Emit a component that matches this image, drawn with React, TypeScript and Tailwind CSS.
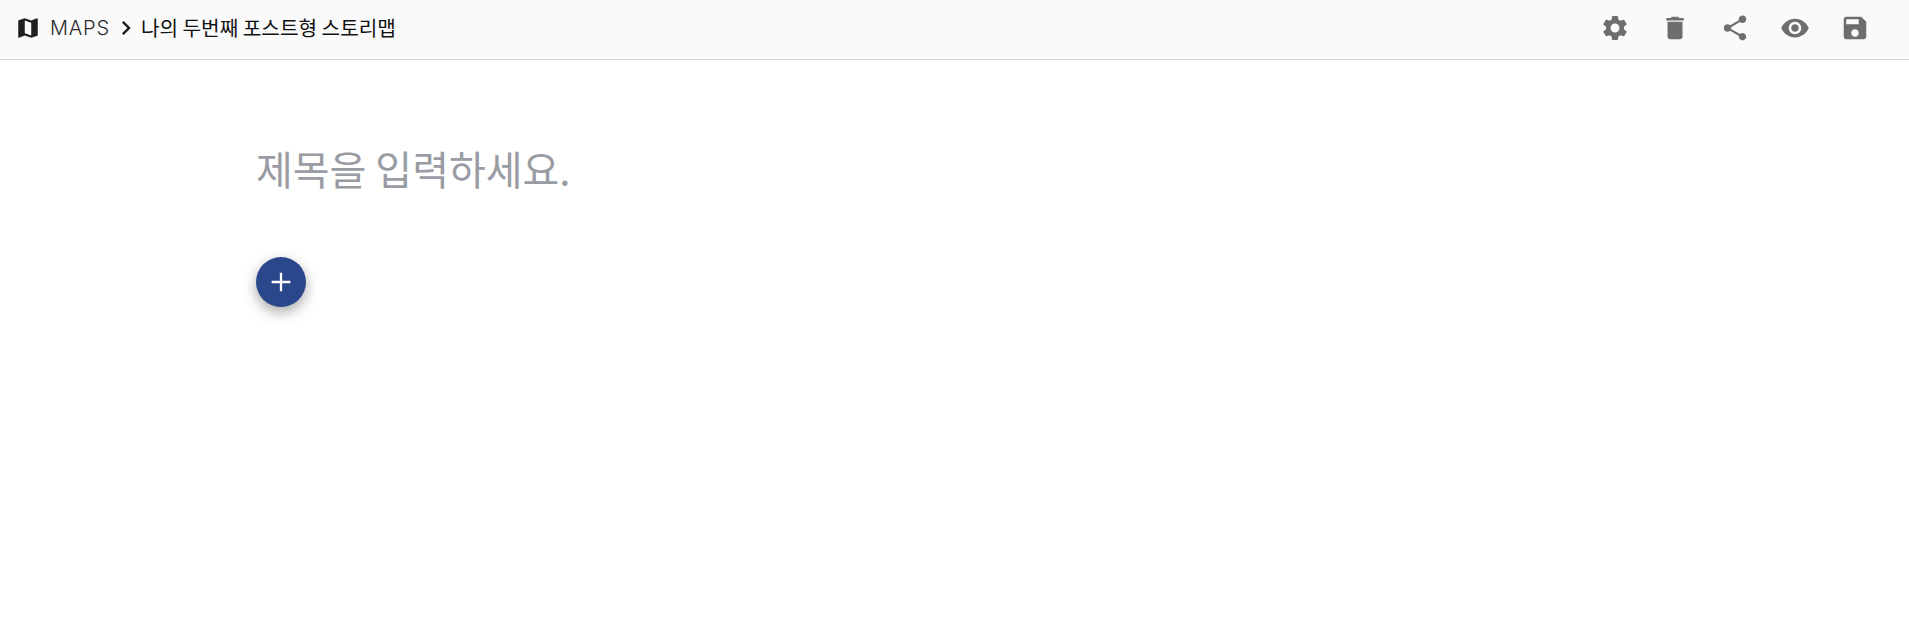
const icons = [
  'M19.14 12.94c.04-.3.06-.61.06-.94 0-.32-.02-.64-.07-.94l2.03-1.58c.18-.14.23-.41.12-.61l-1.92-3.32c-.12-.22-.37-.29-.59-.22l-2.39.96c-.5-.38-1.03-.7-1.62-.94l-.36-2.54c-.04-.24-.24-.41-.48-.41h-3.84c-.24 0-.43.17-.47.41l-.36 2.54c-.59.24-1.13.57-1.62.94l-2.39-.96c-.22-.08-.47 0-.59.22L2.74 8.87c-.12.21-.08.47.12.61l2.03 1.58c-.05.3-.09.63-.09.94s.02.64.07.94l-2.03 1.58c-.18.14-.23.41-.12.61l1.92 3.32c.12.22.37.29.59.22l2.39-.96c.5.38 1.03.7 1.62.94l.36 2.54c.05.24.24.41.48.41h3.84c.24 0 .44-.17.47-.41l.36-2.54c.59-.24 1.13-.56 1.62-.94l2.39.96c.22.08.47 0 .59-.22l1.92-3.32c.12-.22.07-.47-.12-.61l-2.01-1.58zM12 15.6c-1.98 0-3.6-1.62-3.6-3.6s1.62-3.6 3.6-3.6 3.6 1.62 3.6 3.6-1.62 3.6-3.6 3.6z',
  'M6 19c0 1.1.9 2 2 2h8c1.1 0 2-.9 2-2V7H6v12zM19 4h-3.5l-1-1h-5l-1 1H5v2h14V4z',
  'M18 16.08c-.76 0-1.44.3-1.96.77L8.91 12.7c.05-.23.09-.46.09-.7s-.04-.47-.09-.7l7.05-4.11c.54.5 1.25.81 2.04.81 1.66 0 3-1.34 3-3s-1.34-3-3-3-3 1.34-3 3c0 .24.04.47.09.7L8.04 9.81C7.5 9.31 6.79 9 6 9c-1.66 0-3 1.34-3 3s1.34 3 3 3c.79 0 1.5-.31 2.04-.81l7.12 4.16c-.05.21-.08.43-.08.65 0 1.61 1.31 2.92 2.92 2.92 1.61 0 2.92-1.31 2.92-2.92s-1.31-2.92-2.92-2.92z',
  'M12 4.5C7 4.5 2.73 7.61 1 12c1.73 4.39 6 7.5 11 7.5s9.27-3.11 11-7.5c-1.73-4.39-6-7.5-11-7.5zM12 17c-2.76 0-5-2.24-5-5s2.24-5 5-5 5 2.24 5 5-2.24 5-5 5zm0-8c-1.66 0-3 1.34-3 3s1.34 3 3 3 3-1.34 3-3-1.34-3-3-3z',
  'M17 3H5c-1.11 0-2 .9-2 2v14c0 1.1.89 2 2 2h14c1.1 0 2-.9 2-2V7l-4-4zm-5 16c-1.66 0-3-1.34-3-3s1.34-3 3-3 3 1.34 3 3-1.34 3-3 3zm3-10H5V5h10v4z',
];

export default function App() {
  return (
    <div className="min-h-[634px] bg-white font-['Noto_Sans_CJK_KR',sans-serif]">
      <header className="flex h-[60px] items-center justify-between border-b border-[#d4d4d4] bg-[#fafafa] pb-[3px] pl-[15px] pr-[39px]">
        <div className="flex items-center">
          <svg viewBox="0 0 24 24" className="h-[26px] w-[26px] fill-[#1f1f1f]">
            <path d="M20.5 3l-.16.03L15 5.1 9 3 3.36 4.9c-.21.07-.36.25-.36.48V20.5c0 .28.22.5.5.5l.16-.03L9 18.9l6 2.1 5.64-1.9c.21-.07.36-.25.36-.48V3.5c0-.28-.22-.5-.5-.5zM15 19l-6-2.11V5l6 2.11V19z" />
          </svg>
          <span className="ml-[9px] font-['Inter',sans-serif] text-[20px] font-light tracking-[0.8px] text-[#2a2a2a]">MAPS</span>
          <svg viewBox="0 0 24 24" className="ml-[2px] h-[28px] w-[28px] fill-[#1a1a1a]">
            <path d="M10 6L8.59 7.41 13.17 12l-4.58 4.59L10 18l6-6z" />
          </svg>
          <span className="ml-[1px] text-[20.2px] text-[#111]">나의 두번째 포스트형 스토리맵</span>
        </div>
        <div className="flex items-center gap-[30px]">
          {icons.map((d) => (
            <svg key={d} viewBox="0 0 24 24" className="h-[30px] w-[30px] fill-[#6e6e6e]">
              <path d={d} />
            </svg>
          ))}
        </div>
      </header>
      <main className="pl-[256px] pt-[82px]">
        <div className="text-[40px] leading-[52px] text-[#999ca3]">제목을 입력하세요.</div>
        <button className="mt-[63px] flex h-[50px] w-[50px] items-center justify-center rounded-full bg-[#2b478b] shadow-[0_5px_14px_rgba(0,0,0,0.35)]">
          <svg viewBox="0 0 24 24" className="h-[28px] w-[28px] fill-white">
            <path d="M20 13h-7v7h-2v-7H4v-2h7V4h2v7h7z" />
          </svg>
        </button>
      </main>
    </div>
  );
}
